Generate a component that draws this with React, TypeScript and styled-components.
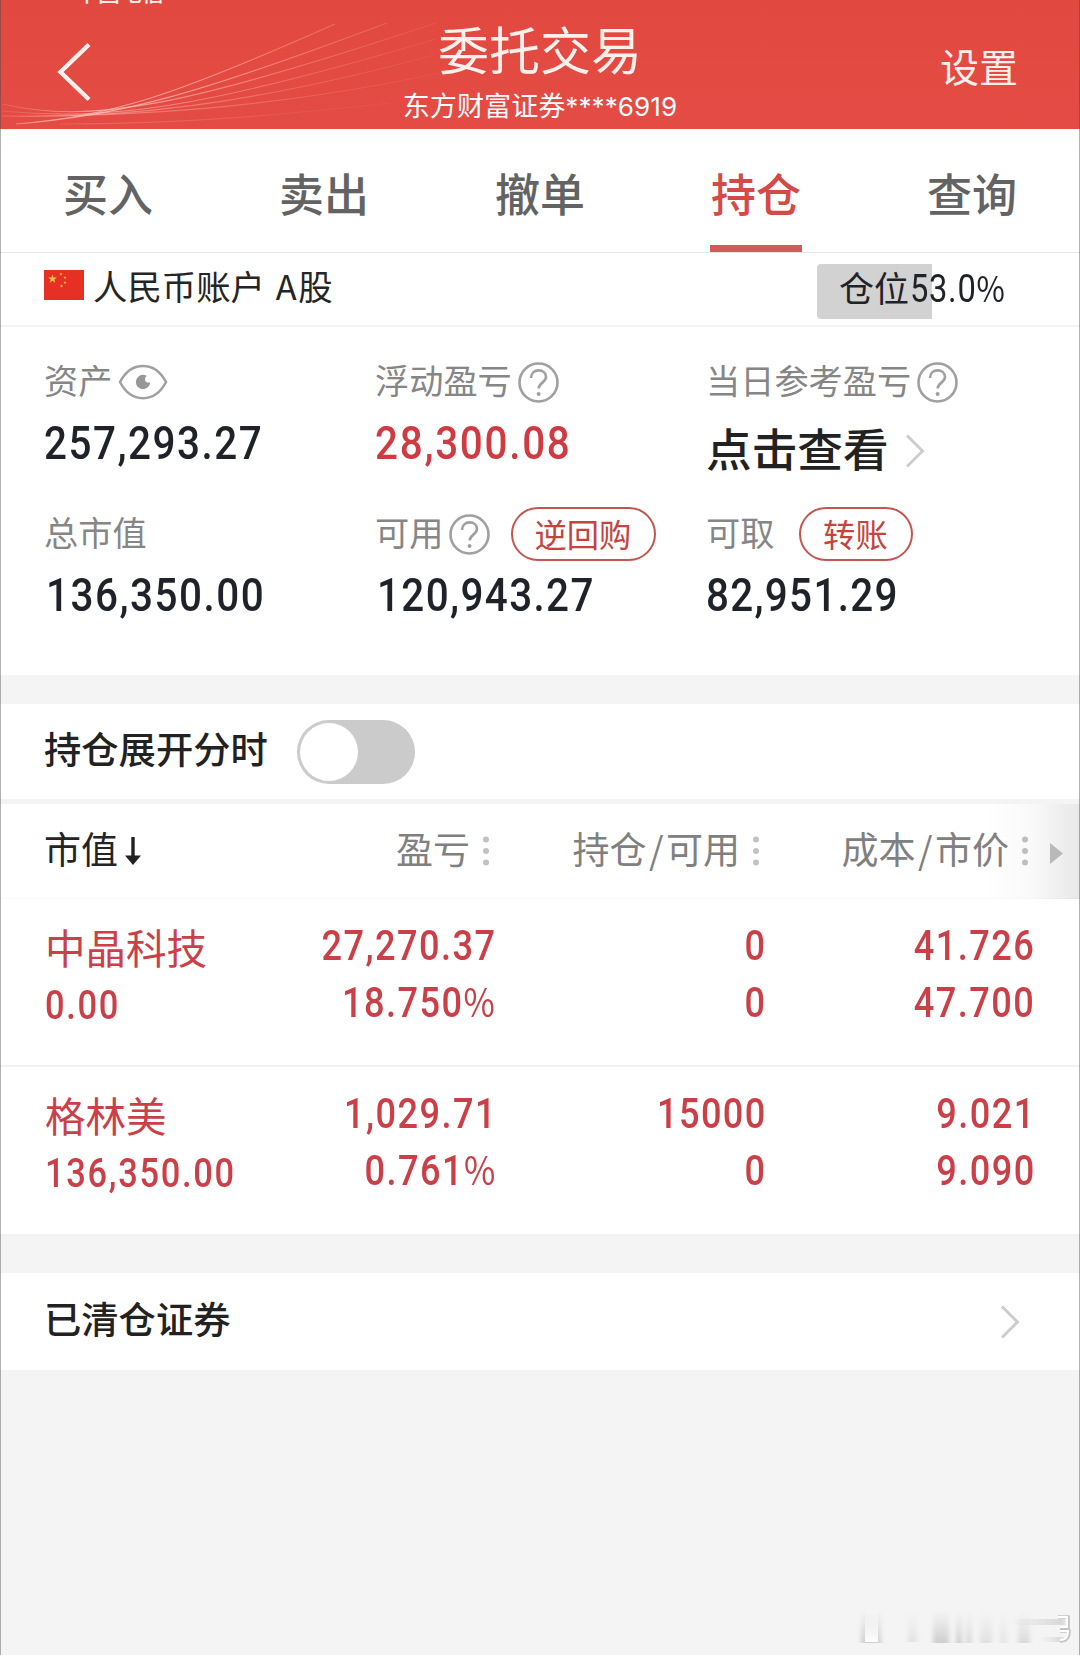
import React from "react";
import styled, { createGlobalStyle } from "styled-components";

const CJK = `"Noto Sans CJK SC", "Noto Sans", sans-serif`;
const RED = "#cb4048";

const Global = createGlobalStyle`
  * { box-sizing: border-box; }
  body { margin: 0; background: #f4f4f4; }
`;

const Screen = styled.div`
  position: relative;
  display: flex;
  flex-direction: column;
  width: 1080px;
  height: 1655px;
  overflow: hidden;
  background: #f4f4f4;
  font-family: ${CJK};
  line-height: 1;
  color: #222;
  white-space: nowrap;
  &::after {
    content: "";
    position: absolute;
    inset: 0;
    border: solid rgba(70, 70, 70, 0.42);
    border-width: 0 1px;
    pointer-events: none;
  }
`;

/* ---------- header ---------- */
const Header = styled.header`
  position: relative;
  display: grid;
  grid-template-columns: 1fr 300px 1fr;
  height: 129px;
  overflow: hidden;
  background: linear-gradient(#e14940, #e34b44);
  color: #fff0ec;
`;
const Waves = styled.svg`
  position: absolute;
  left: 0;
  top: 0;
`;
const Carrier = styled.span`
  position: absolute;
  left: 76px;
  top: -20px;
  font-size: 22px;
  font-weight: 500;
`;
const BackButton = styled.div`
  padding: 42px 0 0 56px;
  svg { display: block; }
`;
const TitleBlock = styled.div`
  display: flex;
  flex-direction: column;
  align-items: center;
`;
const Title = styled.h1`
  margin: 22px 0 0;
  font-size: 51px;
  line-height: 52px;
  font-weight: 400;
`;
const Broker = styled.div`
  margin-top: 17px;
  font-size: 27.1px;
  line-height: 28px;
  color: #fff;
`;
const BrokerId = styled.span`
  font-family: Inter, "Liberation Sans", sans-serif;
  font-size: 26px;
  letter-spacing: 0.1px;
`;
const Settings = styled.div`
  justify-self: end;
  margin: 45px 62px 0 0;
  font-size: 39px;
  line-height: 40px;
`;

/* ---------- tabs ---------- */
const Tabs = styled.nav`
  display: grid;
  grid-template-columns: repeat(5, 1fr);
  height: 124px;
  background: #fff;
  border-bottom: 1px solid #e6e6e6;
`;
const Tab = styled.div<{ $active?: boolean }>`
  display: flex;
  flex-direction: column;
  align-items: center;
  justify-content: space-between;
  padding-top: 41px;
  font-size: 45px;
  line-height: 46px;
  font-weight: 500;
  color: ${(p) => (p.$active ? "#d34a47" : "#636363")};
`;
const TabBar = styled.i`
  width: 92px;
  height: 7px;
  background: #d25b5a;
`;

/* ---------- account ---------- */
const Account = styled.section`
  display: flex;
  justify-content: space-between;
  height: 74px;
  padding: 0 44px;
  background: #fff;
  border-bottom: 2px solid #f3f3f3;
`;
const AccountName = styled.div`
  display: flex;
  gap: 9px;
  padding-top: 17px;
  font-size: 34.4px;
  line-height: 31px;
  color: #252525;
`;
const Board = styled.span`
  margin-left: 3px;
  letter-spacing: 1.6px;
`;
const Flag = styled.svg`
  display: block;
`;
const PositionTag = styled.div`
  display: flex;
  align-items: center;
  width: 219px;
  height: 55px;
  margin-top: 11px;
  padding: 0 0 5px 22px;
  border-radius: 4px;
  background: linear-gradient(#d2d2d2, #d2d2d2) 0 0 / 115px 100% no-repeat;
  font-size: 35px;
  color: #1f2228;
`;
const PositionLabel = styled.span`
  margin: -6px 1px 0 0;
`;

/* Condensed figures: narrowed from the side named by $from. */
const Figures = styled.span<{
  $size: number;
  $track: number;
  $from: "left" | "right";
  $weight: number;
}>`
  display: inline-block;
  margin-right: -${(p) => p.$track}px;
  font-family: Roboto, "Liberation Sans", sans-serif;
  font-size: ${(p) => p.$size}px;
  font-weight: ${(p) => p.$weight};
  letter-spacing: ${(p) => p.$track}px;
  transform: scaleX(0.86);
  transform-origin: ${(p) => p.$from} center;
`;
const Percent = styled.span`
  font-family: ${CJK};
  font-size: 0.94em;
  font-weight: 400;
  line-height: 0;
`;

function Num({
  children,
  size = 47,
  track = 1.75,
  from = "left",
  weight = 500,
}: {
  children: string;
  size?: number;
  track?: number;
  from?: "left" | "right";
  weight?: number;
}) {
  const pct = children.endsWith("%");
  return (
    <Figures $size={size} $track={track} $from={from} $weight={weight}>
      {pct ? children.slice(0, -1) : children}
      {pct && <Percent>%</Percent>}
    </Figures>
  );
}

/* ---------- summary ---------- */
const Summary = styled.section`
  display: grid;
  grid-template-columns: 331px 331px 1fr;
  grid-auto-rows: 121px;
  row-gap: 31px;
  height: 348px;
  padding: 26px 0 0 44px;
  background: #fff;
`;
const Metric = styled.div`
  display: flex;
  flex-direction: column;
`;
const MetricHead = styled.div`
  display: flex;
  flex: none;
  align-items: center;
  height: 58px;
  font-size: 34.2px;
  color: #868686;
`;
const MetricLabel = styled.span`
  margin: -5px 6px 0 0;
`;
const MetricValue = styled.div<{ $red?: boolean; $indent?: boolean }>`
  display: flex;
  align-items: center;
  height: 63px;
  padding-left: ${(p) => (p.$indent ? 2 : 0)}px;
  color: ${(p) => (p.$red ? "#d03a42" : "#1f2228")};
`;
const ViewLink = styled.div`
  display: flex;
  flex: none;
  align-items: center;
  gap: 16px;
  height: 79px;
  font-size: 45.7px;
  font-weight: 500;
  color: #222;
  span { margin-top: -6px; }
`;
const Pill = styled.span<{ $gap: number; $width: number }>`
  display: flex;
  justify-content: center;
  width: ${(p) => p.$width}px;
  height: 54px;
  margin-left: ${(p) => p.$gap}px;
  padding: 8px 2px 0 0;
  border: 2px solid #c4544e;
  border-radius: 27px;
  font-size: 32.3px;
  color: #c4433e;
`;

/* ---------- switch row ---------- */
const Gap = styled.div<{ $h: number }>`
  flex: none;
  height: ${(p) => p.$h}px;
  background: #f4f4f4;
`;
const SwitchRow = styled.section`
  display: flex;
  align-items: center;
  gap: 29px;
  height: 95px;
  padding-left: 44px;
  background: #fff;
  font-size: 37.3px;
  font-weight: 500;
  span { margin-top: -6px; }
`;
const Switch = styled.div`
  width: 118px;
  height: 64px;
  padding: 3px;
  border-radius: 32px;
  background: #cbcbcb;
`;
const Knob = styled.div`
  width: 58px;
  height: 58px;
  border-radius: 50%;
  background: #fff;
`;

/* ---------- holdings ---------- */
const columns = `44px 226px 225px 270px 269px`;
const TableHead = styled.div`
  position: relative;
  display: grid;
  grid-template-columns: ${columns};
  align-items: center;
  height: 95px;
  background: #fff;
  border-bottom: 1px solid #fafafa;
  font-size: 37px;
  color: #808080;
`;
const HeadCell = styled.div<{ $main?: boolean }>`
  display: flex;
  align-items: center;
  justify-content: ${(p) => (p.$main ? "flex-start" : "flex-end")};
  gap: ${(p) => (p.$main ? 7 : 13)}px;
  grid-column: ${(p) => (p.$main ? 2 : "auto")};
  padding-right: ${(p) => (p.$main ? 0 : 6)}px;
  color: ${(p) => (p.$main ? "#242424" : "inherit")};
`;
const HeadLabel = styled.span`
  display: flex;
  gap: 2.5px;
  margin-top: -5px;
`;
const ScrollHint = styled.div`
  position: absolute;
  right: 0;
  top: 0;
  display: flex;
  align-items: center;
  justify-content: flex-end;
  width: 96px;
  height: 95px;
  padding: 3px 17px 0 0;
  background: linear-gradient(90deg, rgba(0, 0, 0, 0), rgba(0, 0, 0, 0.025) 50%, rgba(0, 0, 0, 0.09));
`;
const Holding = styled.div`
  display: grid;
  grid-template-columns: ${columns};
  align-content: start;
  height: 168px;
  padding-top: 26px;
  background: #fff;
  border-bottom: 2px solid #f2f2f2;
  color: ${RED};
  & + & {
    height: 169px;
  }
`;
const HoldCell = styled.div<{ $name?: boolean }>`
  display: flex;
  flex-direction: column;
  align-items: ${(p) => (p.$name ? "flex-start" : "flex-end")};
  grid-column: ${(p) => (p.$name ? 2 : "auto")};
  gap: ${(p) => (p.$name ? 17 : 15)}px;
  padding: ${(p) => (p.$name ? "1px 0 0 1px" : 0)};
  line-height: 42px;
`;
const StockName = styled.span`
  font-size: 40.5px;
`;

const ClearedRow = styled.section`
  display: flex;
  align-items: center;
  justify-content: space-between;
  height: 97px;
  padding: 0 60px 0 44px;
  background: #fff;
  font-size: 37.3px;
  font-weight: 500;
  span { margin-top: -6px; }
`;
const Footer = styled.footer`
  display: flex;
  flex: 1;
  align-items: flex-end;
  justify-content: flex-end;
`;

/* ---------- drawings ---------- */
const Help = () => (
  <svg width="41" height="41" viewBox="0 0 41 41" fill="none" stroke="#a0a0a0">
    <circle cx="20.5" cy="20.5" r="19" strokeWidth="2.6" />
    <path d="M13 16c.2-4.800 3.400-7.600 7.500-7.600 4.300 0 7.500 2.700 7.500 6.600 0 5.600-7.300 5.700-7.300 11.500" strokeWidth="2.600" />
    <circle cx="20.600" cy="32" r="2" fill="#a0a0a0" stroke="none" />
  </svg>
);
const Eye = () => (
  <svg width="50" height="36" viewBox="0 0 50 36">
    <path d="M2 18C13-3.500 37-3.500 48 18 37 39.500 13 39.500 2 18Z" fill="none" stroke="#a0a0a0" strokeWidth="2.500" />
    <circle cx="25" cy="18" r="7.200" fill="#979797" />
    <circle cx="30.500" cy="15.200" r="3.400" fill="#fff" />
  </svg>
);
const Chevron = () => (
  <svg width="20" height="34" viewBox="0 0 20 34" fill="none" stroke="#cdcdcd" strokeWidth="3">
    <path d="M2 1.500l15.500 15.500L2 32.500" />
  </svg>
);
const Dots = () => (
  <svg width="6" height="30" viewBox="0 0 6 30" fill="#c2c2c2">
    <circle cx="3" cy="3.500" r="3" />
    <circle cx="3" cy="15" r="3" />
    <circle cx="3" cy="26.500" r="3" />
  </svg>
);
const WaveLines = () => (
  <Waves width="480" height="129" fill="none">
    <defs>
      <linearGradient id="wave" gradientUnits="userSpaceOnUse" x1="0" y1="0" x2="440" y2="0">
        <stop offset="0" stopColor="#ffb0a6" stopOpacity=".25" />
        <stop offset=".22" stopColor="#ffc4bc" stopOpacity=".9" />
        <stop offset=".5" stopColor="#ffb0a6" stopOpacity=".75" />
        <stop offset="1" stopColor="#ffa096" stopOpacity=".15" />
      </linearGradient>
    </defs>
    <g stroke="url(#wave)" strokeWidth="1.200">
      <path d="M16 124C110 117 175 95 335 24" opacity=".8" />
      <path d="M16 124C120 115 190 97 387 23" opacity=".9" />
      <path d="M2 104C90 124 180 108 436 23" opacity=".8" />
      <path d="M2 111C110 121 200 109 436 39" opacity=".65" />
      <path d="M2 116C120 119 250 105 434 55" opacity=".55" />
      <path d="M2 116C130 117 270 109 440 73" opacity=".5" />
      <path d="M60 124C190 124 290 114 390 103" opacity=".25" />
    </g>
  </Waves>
);

const Star = ({ x, y, r }: { x: number; y: number; r: number }) => {
  const points = Array.from({ length: 10 }, (_, i) => {
    const a = (Math.PI / 5) * i - Math.PI / 2;
    const d = i % 2 ? r * 0.4 : r;
    return `${x + d * Math.cos(a)},${y + d * Math.sin(a)}`;
  }).join(" ");
  return <polygon points={points} fill="#fbc04a" />;
};

const Smudge = () => (
  <svg width="230" height="50" viewBox="0 0 230 50">
    <defs>
      <linearGradient id="fade" x1="0" y1="0" x2="0" y2="1">
        <stop offset="0" stopColor="#cfcfcf" stopOpacity="0" />
        <stop offset="1" stopColor="#c4c4c4" stopOpacity=".8" />
      </linearGradient>
      <linearGradient id="pale" x1="0" y1="0" x2="0" y2="1">
        <stop offset="0" stopColor="#fff" stopOpacity=".1" />
        <stop offset="1" stopColor="#fff" />
      </linearGradient>
      <linearGradient id="across">
        <stop offset="0" stopColor="#b8b8b8" stopOpacity="0" />
        <stop offset="1" stopColor="#a8a8a8" />
      </linearGradient>
      <filter id="soft" x="-10%" y="-10%" width="120%" height="120%">
        <feGaussianBlur stdDeviation="2 0.500" />
      </filter>
    </defs>
    <g filter="url(#soft)">
      <rect x="11" y="5" width="20" height="33" fill="url(#fade)" />
      <rect x="58" y="8" width="9" height="29" fill="url(#fade)" opacity=".45" />
      <rect x="83" y="5" width="16" height="33" fill="url(#fade)" />
      <rect x="106" y="7" width="6" height="31" fill="url(#fade)" />
      <rect x="116" y="7" width="6" height="31" fill="url(#fade)" opacity=".7" />
      <rect x="130" y="7" width="12" height="31" fill="url(#fade)" opacity=".5" />
      <rect x="150" y="7" width="7" height="31" fill="url(#fade)" opacity=".4" />
      <rect x="168" y="7" width="12" height="31" fill="url(#fade)" opacity=".7" />
      <rect x="160" y="14" width="55" height="6" fill="url(#across)" opacity=".4" />
      <rect x="190" y="32" width="24" height="5" fill="url(#across)" opacity=".4" />
    </g>
    <rect x="15" y="5" width="13" height="32" fill="url(#pale)" />
    <path d="M208 12h10v11h-8M210 26h9q0 10-9 10" fill="none" stroke="#c4c4c4" strokeWidth="3.600" />
    <path d="M208 12h9v10h-7M210 26h8q0 9-8 9" fill="none" stroke="#fff" strokeWidth="2" />
  </svg>
);

const tabs = ["买入", "卖出", "撤单", "持仓", "查询"];

const holdings = [
  {
    name: "中晶科技",
    value: "0.00",
    cells: [
      ["27,270.37", "18.750%"],
      ["0", "0"],
      ["41.726", "47.700"],
    ],
  },
  {
    name: "格林美",
    value: "136,350.00",
    cells: [
      ["1,029.71", "0.761%"],
      ["15000", "0"],
      ["9.021", "9.090"],
    ],
  },
];

export default function App() {
  return (
    <>
      <Global />
      <Screen>
        <Header>
          <WaveLines />
          <Carrier>中国电信</Carrier>
          <BackButton>
            <svg width="36" height="62" viewBox="0 0 36 62" fill="none" stroke="#fff0ec" strokeWidth="4.400">
              <path d="M33 2.500L4.500 30 33 57.500" />
            </svg>
          </BackButton>
          <TitleBlock>
            <Title>委托交易</Title>
            <Broker>
              东方财富证券<BrokerId>****6919</BrokerId>
            </Broker>
          </TitleBlock>
          <Settings>设置</Settings>
        </Header>

        <Tabs>
          {tabs.map((t) => (
            <Tab key={t} $active={t === "持仓"}>
              {t}
              {t === "持仓" && <TabBar />}
            </Tab>
          ))}
        </Tabs>

        <Account>
          <AccountName>
            <Flag width="40" height="30" viewBox="0 0 40 30">
              <rect width="40" height="30" fill="#e63023" />
              <Star x={8.5} y={9} r={4.6} />
              <Star x={17} y={4} r={1.7} />
              <Star x={21} y={7.5} r={1.7} />
              <Star x={21} y={12.5} r={1.7} />
              <Star x={17.5} y={16} r={1.7} />
            </Flag>
            <div>
              人民币账户 <Board>A股</Board>
            </div>
          </AccountName>
          <PositionTag>
            <PositionLabel>仓位</PositionLabel>
            <Num size={38} track={0.8} weight={400}>53.0%</Num>
          </PositionTag>
        </Account>

        <Summary>
          <Metric>
            <MetricHead>
              <MetricLabel>资产</MetricLabel>
              <Eye />
            </MetricHead>
            <MetricValue><Num>257,293.27</Num></MetricValue>
          </Metric>
          <Metric>
            <MetricHead>
              <MetricLabel>浮动盈亏</MetricLabel>
              <Help />
            </MetricHead>
            <MetricValue $red><Num track={2}>28,300.08</Num></MetricValue>
          </Metric>
          <Metric>
            <MetricHead>
              <MetricLabel>当日参考盈亏</MetricLabel>
              <Help />
            </MetricHead>
            <ViewLink>
              <span>点击查看</span>
              <Chevron />
            </ViewLink>
          </Metric>
          <Metric>
            <MetricHead>
              <MetricLabel>总市值</MetricLabel>
            </MetricHead>
            <MetricValue $indent><Num>136,350.00</Num></MetricValue>
          </Metric>
          <Metric>
            <MetricHead>
              <MetricLabel>可用</MetricLabel>
              <Help />
              <Pill $gap={21} $width={145}>逆回购</Pill>
            </MetricHead>
            <MetricValue $indent><Num track={1.6}>120,943.27</Num></MetricValue>
          </Metric>
          <Metric>
            <MetricHead>
              <MetricLabel>可取</MetricLabel>
              <Pill $gap={19} $width={114}>转账</Pill>
            </MetricHead>
            <MetricValue><Num track={1.5}>82,951.29</Num></MetricValue>
          </Metric>
        </Summary>

        <Gap $h={29} />
        <SwitchRow>
          <span>持仓展开分时</span>
          <Switch><Knob /></Switch>
        </SwitchRow>
        <Gap $h={5} />

        <TableHead>
          <HeadCell $main>
            <HeadLabel>市值</HeadLabel>
            <svg width="16" height="28" viewBox="0 0 16 28">
              <path d="M6.300 0h3.400v18.500H16L8 28 0 18.500h6.300Z" fill="#222" />
            </svg>
          </HeadCell>
          {["盈亏", "持仓/可用", "成本/市价"].map((h) => (
            <HeadCell key={h}>
              <HeadLabel>
                {h.split(/(\/)/).map((part) => (
                  <span key={part}>{part}</span>
                ))}
              </HeadLabel>
              <Dots />
            </HeadCell>
          ))}
          <ScrollHint>
            <svg width="13" height="21" viewBox="0 0 13 21">
              <path d="M0 0l13 10.500L0 21Z" fill="#b9b9b9" />
            </svg>
          </ScrollHint>
        </TableHead>

        {holdings.map((h) => (
          <Holding key={h.name}>
            <HoldCell $name>
              <StockName>{h.name}</StockName>
              <Num size={40} track={2}>{h.value}</Num>
            </HoldCell>
            {h.cells.map(([a, b], c) => (
              <HoldCell key={c}>
                <Num size={42} track={1.7} from="right">{a}</Num>
                <Num size={42} track={1.7} from="right">{b}</Num>
              </HoldCell>
            ))}
          </Holding>
        ))}

        <Gap $h={37} />
        <ClearedRow>
          <span>已清仓证券</span>
          <Chevron />
        </ClearedRow>
        <Footer>
          <Smudge />
        </Footer>
      </Screen>
    </>
  );
}
